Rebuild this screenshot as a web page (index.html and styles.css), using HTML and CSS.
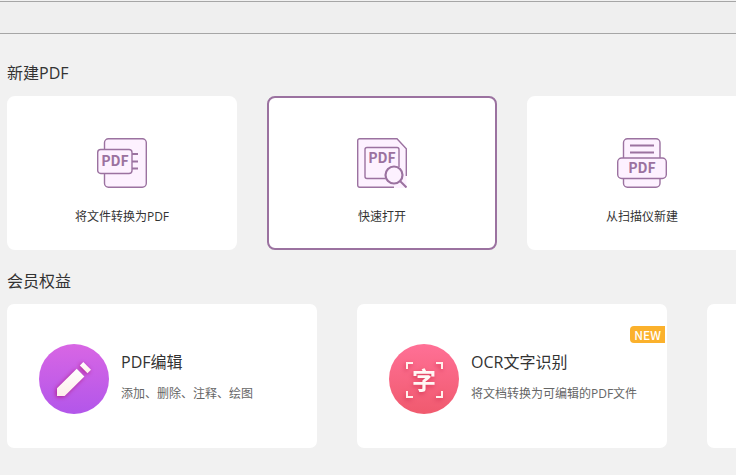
FILE: index.html
```
<!DOCTYPE html>
<html lang="zh-CN">
<head>
    <meta charset="utf-8">
    <title>PDF</title>
    <link rel="stylesheet" href="styles.css">
</head>
<body>
    <header class="toolbar"></header>
    <main>
        <section>
            <h2>新建PDF</h2>
            <div class="card-row create-row">
                <button class="create-card" type="button">
                    <svg class="line-icon" viewBox="0 0 50 50">
                        <rect x="7.5" y="0.7" width="41.8" height="48.6" rx="4"/>
                        <path d="M35 16h6M35 23.5h6M35 30.5h6" stroke-width="1.8"/>
                        <rect x="0.7" y="11.5" width="34.3" height="24" rx="3"/>
                        <text x="18" y="28">PDF</text>
                    </svg>
                    <span>将文件转换为PDF</span>
                </button>
                <button class="create-card selected" type="button">
                    <svg class="line-icon" viewBox="0 0 50 50">
                        <path class="fill" d="M2.5.5H40l9.5 10V50h-47a2 2 0 0 1-2-2V2.500a2 2 0 0 1 2-2z"/>
                        <path d="M37 49.300H2.700a2 2 0 0 1-2-2V2.700a2 2 0 0 1 2-2H40l9.300 10V38" fill="none"/>
                        <path d="M28 40.500H10a2 2 0 0 1-2-2V11.500a2 2 0 0 1 2-2h30a2 2 0 0 1 2 2V29"/>
                        <text x="25" y="25">PDF</text>
                        <circle cx="37" cy="37" r="8.500" stroke-width="2.2"/>
                        <path d="M43 43l6.500 6.500" stroke-width="2"/>
                    </svg>
                    <span>快速打开</span>
                </button>
                <button class="create-card" type="button">
                    <svg class="line-icon" viewBox="0 0 50 50">
                        <rect x="6.5" y="0.7" width="36.5" height="48.6" rx="4"/>
                        <path d="M13 7.500h24M13 14.500h24" stroke-width="1.8"/>
                        <rect x="0.7" y="20" width="48.6" height="20.5" rx="4"/>
                        <text x="25" y="35">PDF</text>
                    </svg>
                    <span>从扫描仪新建</span>
                </button>
            </div>
        </section>
        <section>
            <h2>会员权益</h2>
            <div class="card-row perk-row">
                <article class="perk-card">
                    <svg class="round-icon" viewBox="0 0 70 70">
                        <defs>
                            <linearGradient id="purple" x1="0" y1="0" x2="0" y2="1">
                                <stop offset="0" stop-color="#d866e4"/>
                                <stop offset="1" stop-color="#b256ea"/>
                            </linearGradient>
                            <linearGradient id="cream" x1="0" y1="0" x2="0" y2="1">
                                <stop offset="0" stop-color="#ffffff"/>
                                <stop offset="1" stop-color="#fdeeea"/>
                            </linearGradient>
                        </defs>
                        <circle cx="35" cy="35" r="35" fill="url(#purple)"/>
                        <g class="pencil" fill="url(#cream)">
                            <path d="M18 52v-7.700L37.700 24.700l7.700 7.700L25.700 52z"/>
                            <path d="M44.300 18l7.700 7.700-3.500 3.500-7.700-7.700z"/>
                        </g>
                    </svg>
                    <div class="perk-text">
                        <h3>PDF编辑</h3>
                        <p>添加、删除、注释、绘图</p>
                    </div>
                </article>
                <article class="perk-card">
                    <svg class="round-icon" viewBox="0 0 70 70">
                        <defs>
                            <linearGradient id="pink" x1="0" y1="0" x2="0" y2="1">
                                <stop offset="0" stop-color="#ff7096"/>
                                <stop offset="1" stop-color="#f05a6e"/>
                            </linearGradient>
                        </defs>
                        <circle cx="35" cy="35" r="35" fill="url(#pink)"/>
                        <g class="scan">
                            <path d="M18 25v-6h6M47 19h6v6M53 47v6h-6M24 53h-6v-6"/>
                            <text x="35" y="45">字</text>
                        </g>
                    </svg>
                    <div class="perk-text">
                        <h3>OCR文字识别</h3>
                        <p>将文档转换为可编辑的PDF文件</p>
                    </div>
                    <span class="badge">NEW</span>
                </article>
                <article class="perk-card"></article>
            </div>
        </section>
    </main>
</body>
</html>
```
FILE: styles.css
```
:root {
    --color-background: #f1f1f1;
    --color-bar: #efefef;
    --color-line: #a6a6a6;
    --color-text: #333;
    --color-muted: #666;
    --color-primary: #9b72a0;
    --color-icon: #fdf1ff;
    --color-badge: #fbb12c;
}

* {
    box-sizing: border-box;
}
body {
    margin: 0;
    background-color: var(--color-background);
    color: var(--color-text);
    font-family: "Open Sans", "Noto Sans CJK SC", sans-serif;
}
.toolbar {
    height: 33px;
    margin-top: 1px;
    border-top: 1px solid var(--color-line);
    border-bottom: 1px solid var(--color-line);
    background-color: var(--color-bar);
}
main {
    display: flex;
    flex-direction: column;
    gap: 19px;
    padding: 27px 0 27px 7px;
}
h2, h3 {
    margin: 0;
    font-size: 16px;
    font-weight: 400;
    line-height: 24px;
}
h2 {
    margin-bottom: 11px;
}
.card-row {
    display: flex;
    overflow: hidden;
}
.create-row {
    gap: 30px;
}
.perk-row {
    gap: 40px;
}
.create-card {
    display: flex;
    flex: 0 0 230px;
    flex-direction: column;
    align-items: center;
    gap: 20px;
    padding: 40px 0 22px;
    border: 2px solid #fff;
    border-radius: 8px;
    background-color: #fff;
    color: var(--color-text);
    font-family: inherit;
    font-size: 12px;
    line-height: 18px;
    cursor: pointer;
}
.create-card.selected,
.create-card:hover {
    border-color: var(--color-primary);
}
.line-icon {
    width: 50px;
    height: 50px;
    fill: var(--color-icon);
    stroke: var(--color-primary);
    stroke-width: 1.4;
}
.line-icon .fill {
    stroke: none;
}
.line-icon text {
    fill: var(--color-primary);
    stroke: none;
    font-family: "Noto Sans CJK SC", sans-serif;
    font-size: 14px;
    font-weight: 700;
    text-anchor: middle;
}
.perk-card {
    position: relative;
    display: flex;
    flex: 0 0 310px;
    gap: 12px;
    min-height: 144px;
    padding: 40px 0 34px 32px;
    border-radius: 7px;
    background-color: #fff;
}
.round-icon {
    flex: none;
    width: 70px;
    height: 70px;
}
.pencil {
    filter: drop-shadow(-1px 1px 2px #b0208c);
}
.scan {
    filter: drop-shadow(-1px 2px 2px #d83c5a);
}
.scan path {
    fill: none;
    stroke: #fff0ec;
    stroke-width: 2;
}
.scan text {
    fill: #fff8f5;
    font-size: 24px;
    font-weight: 700;
    text-anchor: middle;
}
.perk-text {
    padding-top: 6px;
}
.perk-text p {
    margin: 11px 0 0;
    color: var(--color-muted);
    font-size: 12px;
    line-height: 18px;
}
.badge {
    position: absolute;
    top: 22px;
    right: 2px;
    padding: 0 4px;
    border-radius: 4px 0 0 4px;
    background-color: var(--color-badge);
    color: #fff;
    font-family: "Noto Sans CJK SC", sans-serif;
    font-size: 12px;
    font-weight: 500;
    line-height: 17px;
}
```
